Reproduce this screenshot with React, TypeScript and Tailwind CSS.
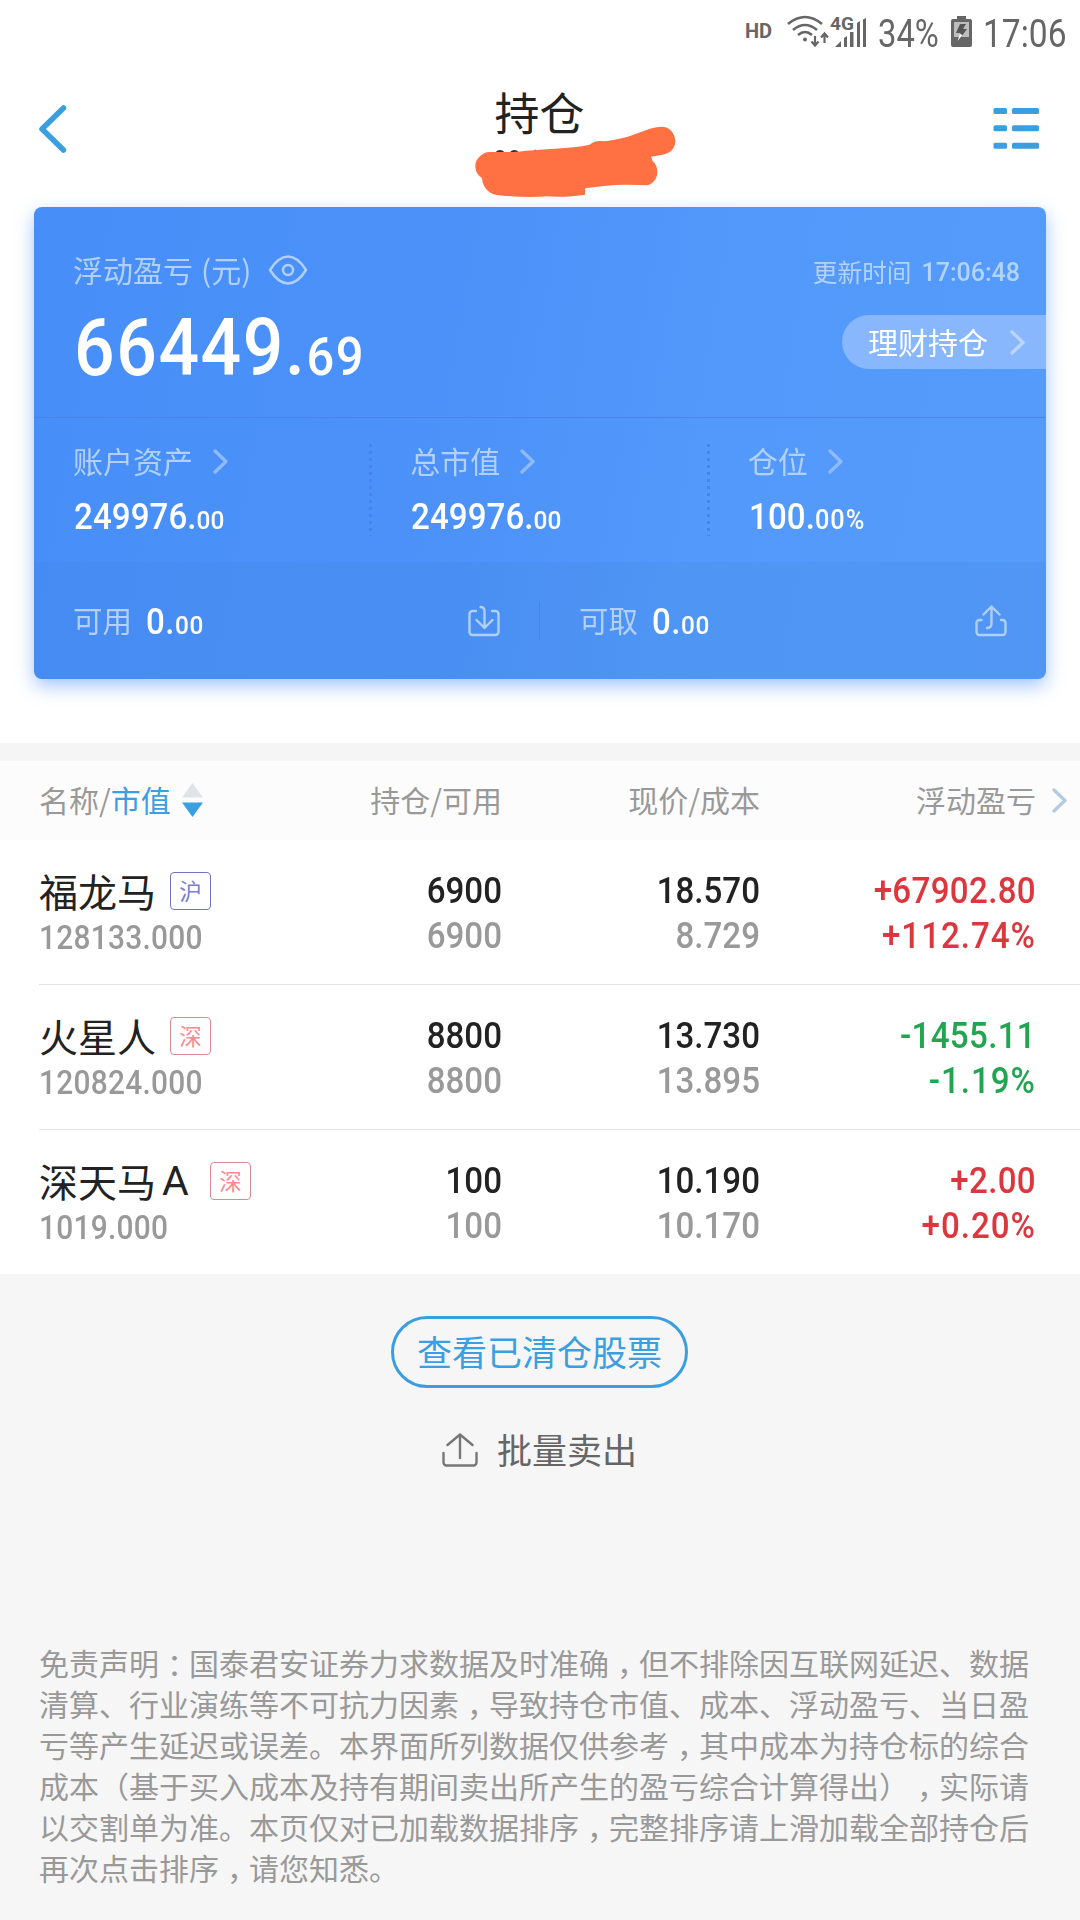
import React from 'react';

const summary = [
  { label: '账户资产', int: '249976.', dec: '00' },
  { label: '总市值', int: '249976.', dec: '00' },
  { label: '仓位', int: '100.', dec: '00%' },
];

const holdings = [
  { name: '福龙马', suffix: '', market: '沪', value: '128133.000', qty: '6900', avail: '6900', price: '18.570', cost: '8.729', profit: '+67902.80', rate: '+112.74%' },
  { name: '火星人', suffix: '', market: '深', value: '120824.000', qty: '8800', avail: '8800', price: '13.730', cost: '13.895', profit: '-1455.11', rate: '-1.19%' },
  { name: '深天马', suffix: 'A', market: '深', value: '1019.000', qty: '100', avail: '100', price: '10.190', cost: '10.170', profit: '+2.00', rate: '+0.20%' },
];

const disclaimer = [
  '免责声明：国泰君安证券力求数据及时准确，但不排除因互联网延迟、数据',
  '清算、行业演练等不可抗力因素，导致持仓市值、成本、浮动盈亏、当日盈',
  '亏等产生延迟或误差。本界面所列数据仅供参考，其中成本为持仓标的综合',
  '成本（基于买入成本及持有期间卖出所产生的盈亏综合计算得出），实际请',
  '以交割单为准。本页仅对已加载数据排序，完整排序请上滑加载全部持仓后',
  '再次点击排序，请您知悉。',
];

const Chevron: React.FC<{ className?: string }> = ({ className = '' }) => (
  <svg viewBox="0 0 15 25" className={`w-[15px] h-[25px] ${className}`} fill="none" stroke="currentColor" strokeWidth="3.300" strokeLinecap="round" strokeLinejoin="round">
    <path d="M2 2l11 10.500L2 23" />
  </svg>
);

const StatusBar: React.FC = () => (
  <div className="h-[62px] flex items-start justify-end text-[#666]">
    <span className="mt-[20px] w-[42px] font-['Roboto'] font-bold text-[20px] leading-[22px]">HD</span>
    <svg viewBox="0 0 84 34" className="mt-[14px] w-[84px] h-[34px]" fill="none" stroke="currentColor">
      <g strokeWidth="2.600">
        <path d="M1 10q17-14 34 0" />
        <path d="M6 16q12-10 24 0" />
        <path d="M11 21q7-6 14 0" />
      </g>
      <circle cx="18" cy="25.500" r="2" fill="currentColor" stroke="none" />
      <path d="M28 22v9M24.500 27.500l3.500 4 3.500-4M37.500 29v-9M34 23.500l3.500-4 3.500 4" strokeWidth="2.200" />
      <text x="43" y="16" fontSize="17.500" fontFamily="Roboto" fontWeight="700" fill="currentColor" stroke="none" textLength="24" lengthAdjust="spacingAndGlyphs">4G</text>
      <path d="M48 33l6-6v6zM57 33v-9l3-2v11zM63 33V18h3.500v15zM70 33V9l3-2v26zM76 33V5.500L79 4v29z" fill="currentColor" stroke="none" />
    </svg>
    <span className="mt-[10px] ml-[7px] w-[73px] origin-left scale-x-[0.84] whitespace-nowrap font-['Roboto'] text-[39px] leading-[48px]">34%</span>
    <svg viewBox="0 0 21 32" className="mt-[16px] w-[21px] h-[32px]">
      <path d="M6 0h9v3h4a2 2 0 0 1 2 2v24a2 2 0 0 1-2 2H2a2 2 0 0 1-2-2V5a2 2 0 0 1 2-2h4z" fill="#666" />
      <path d="M3 6h15v15H3z" fill="#bdbdbd" />
      <path d="M9 8h6l-3 5h4L8 24l1.500-7H5z" fill="#555" />
      <path d="M9 18l-2.500 7 5-6z" fill="#fff" />
    </svg>
    <span className="mt-[10px] ml-[11px] w-[97px] origin-left scale-x-[0.86] whitespace-nowrap font-['Roboto'] text-[39px] leading-[48px]">17:06</span>
  </div>
);

const Header: React.FC = () => (
  <header className="relative h-[145px] px-[38px] flex justify-between">
    <svg viewBox="0 0 30 50" className="mt-[42px] w-[48px] h-[50px]" preserveAspectRatio="xMinYMid meet" fill="none" stroke="#3a9fe0" strokeWidth="5.500" strokeLinecap="round" strokeLinejoin="round">
      <path d="M25.500 4L4 25l21.500 21" />
    </svg>
    <h1 className="mt-[20px] text-[45px] leading-[60px] text-[#222]">持仓</h1>
    <svg viewBox="0 0 48 44" className="mt-[45px] mr-px w-[48px] h-[44px]" fill="#3a9fe0">
      {[1, 18.3, 35.7].map((y) => (
        <g key={y}>
          <rect x="0.500" y={y} width="13.500" height="6" rx="1.500" />
          <rect x="19" y={y} width="27" height="6" rx="1.500" />
        </g>
      ))}
    </svg>
    {/* marker stroke hiding the account number */}
    <svg viewBox="0 0 780 450" className="absolute left-[440px] top-[8px] w-[260px] h-[150px]">
      <path d="M168 250q12-12 24 0M211 250q12-12 24 0M277 250l6-5v9z" fill="#333" stroke="#333" strokeWidth="7" />
      <path
        d="M140 247C118 255 105 272 106 291C107 306 114 317 126 324C127 350 145 371 170 375C215 380 270 383 320 379C360 382 405 379 435 374V355C470 350 500 346 530 345C560 343 590 344 622 346C642 339 652 324 652 305C652 290 645 279 638 274C637 266 633 262 633 260C650 256 668 257 684 249C699 241 706 227 706 212C704 187 686 169 664 170C625 172 590 194 548 204C530 208 510 212 492 214C475 211 462 213 449 224C420 231 385 233 345 236C300 239 265 241 235 245C200 248 170 244 140 247Z"
        fill="#ff7043"
      />
    </svg>
  </header>
);

const AssetCard: React.FC = () => (
  <section className="mx-[34px] h-[472px] rounded-lg overflow-hidden flex flex-col text-white bg-[linear-gradient(100deg,#478ef8_0%,#4c92f9_45%,#5399fb_65%,#559bfb_100%)]">
    <div className="h-[211px] border-b border-[#4685ea] flex justify-between">
      <div className="pl-[40px] pt-[40px]">
        <div className="-ml-px flex items-center h-[44px] text-[30px] leading-[44px] text-[#b2d0fd]">
          <span>浮动盈亏</span>
          <span className="ml-[8px]">(元)</span>
          <svg viewBox="0 0 40 30" className="mt-[2px] ml-[17px] w-[40px] h-[30px]" fill="none" stroke="currentColor" strokeWidth="2.500">
            <path d="M2 15C7 7 13 1.500 20 1.500S33 7 38 15C33 23 27 28.500 20 28.500S7 23 2 15Z" strokeLinejoin="round" />
            <circle cx="20" cy="15" r="5" />
          </svg>
        </div>
        <div className="mt-[4px] origin-left scale-x-[0.905] whitespace-nowrap tracking-[0.022em] font-['Roboto'] font-medium text-[79px] leading-[106px]">
          66449.<span className="text-[54px]">69</span>
        </div>
      </div>
      <div className="flex flex-col items-end">
        <div className="mt-[48px] mr-[26px] flex items-center gap-[10px] h-9 text-[24.700px] text-[#b2d3fd]">
          <span className="-mt-[2px]">更新时间</span>
          <span className="font-['Roboto'] font-medium text-[25px]">17:06:48</span>
        </div>
        <div className="mt-[24px] w-[204px] h-[54px] pl-[26px] pr-[21px] rounded-l-full bg-[#88b7fd] flex items-center justify-between text-[30px] leading-[50px]">
          <span className="pb-[3px]">理财持仓</span>
          <Chevron className="text-[#bad6fe]" />
        </div>
      </div>
    </div>

    <div className="h-[144px] grid grid-cols-3">
      {summary.map((item, i) => (
        <div key={item.label} className="pl-[40px] pt-[20px] flex justify-between">
          <div>
            <div className="-ml-px flex items-center text-[30px] leading-[44px] text-[#b2d0fd]">
              <span>{item.label}</span>
              <Chevron className="mt-[2px] ml-[20px] text-[#8fbbfd]" />
            </div>
            <div className="mt-[11px] origin-left scale-x-[0.92] whitespace-nowrap tracking-[0.002em] font-['Roboto'] font-medium text-[36px] leading-[48px]">
              {item.int}
              <span className={i === 2 ? 'text-[27.5px] tracking-[0.04em]' : 'text-[26.5px]'}>{item.dec}</span>
            </div>
          </div>
          {i < 2 && (
            <div className="mt-[6px] -mr-px h-[92px] w-[3px] bg-[repeating-linear-gradient(to_bottom,#4684e6_0,#4684e6_3px,transparent_3px,transparent_7px)]" />
          )}
        </div>
      ))}
    </div>

    <div className="flex-1 bg-[#3c7dcd]/15 flex items-center">
      <div className="w-[506px] h-[38px] pl-[39px] pr-[39px] flex items-center border-r border-[#4685e0]">
        <span className="-mt-[4px] text-[29.5px] leading-[44px] text-[#b2d0fb]">可用</span>
        <span className="mt-[6px] ml-[14px] origin-left scale-x-[0.92] tracking-[0.015em] font-['Roboto'] font-medium text-[36px] leading-[44px]">
          0.<span className="text-[26.5px]">00</span>
        </span>
        <svg viewBox="0 0 32 32" className="ml-auto w-[32px] h-[32px] text-[#b0cffa]" fill="none" stroke="currentColor" strokeWidth="2.400" strokeLinecap="round" strokeLinejoin="round">
          <path d="M8 6H4.500a3 3 0 0 0-3 3v18a3 3 0 0 0 3 3h23a3 3 0 0 0 3-3V9a3 3 0 0 0-3-3H24" />
          <path d="M12.500 2c2.500 0 4 1.500 4 4.500V22M8.500 15l8 8 8-8" />
        </svg>
      </div>
      <div className="w-[506px] h-[38px] pl-[39px] pr-[39px] flex items-center">
        <span className="-mt-[4px] text-[29.5px] leading-[44px] text-[#b2d0fb]">可取</span>
        <span className="mt-[6px] ml-[14px] origin-left scale-x-[0.92] tracking-[0.015em] font-['Roboto'] font-medium text-[36px] leading-[44px]">
          0.<span className="text-[26.5px]">00</span>
        </span>
        <svg viewBox="0 0 32 32" className="ml-auto w-[32px] h-[32px] text-[#b0cffa]" fill="none" stroke="currentColor" strokeWidth="2.400" strokeLinecap="round" strokeLinejoin="round">
          <path d="M6.500 15H4.500a3 3 0 0 0-3 3v9a3 3 0 0 0 3 3h23a3 3 0 0 0 3-3v-9a3 3 0 0 0-3-3H26" />
          <path d="M12 23c3 0 4.500-1.500 4.500-4.500V2M8.500 9.500l8-8 8 8" />
        </svg>
      </div>
    </div>
  </section>
);

const HoldingsTable: React.FC = () => (
  <section className="bg-white">
    <div className="h-[79px] bg-[#fcfcfc] flex items-center pb-[3px] text-[30px] text-[#999]">
      <div className="w-[241px] pl-[39px] flex items-center whitespace-nowrap">
        <span>名称/<span className="text-[#3a9fe0]">市值</span></span>
        <svg viewBox="0 0 21 34" className="mt-[2px] ml-[11px] shrink-0 w-[21px] h-[34px]">
          <path d="M10.500 0L21 14.500H0z" fill="#e0e4e8" />
          <path d="M0 19.500h21L10.500 34z" fill="#3a9fe0" />
        </svg>
      </div>
      <div className="w-[261px] text-right">持仓/可用</div>
      <div className="w-[258px] text-right">现价/成本</div>
      <div className="w-[276px] text-right">浮动盈亏</div>
      <Chevron className="mt-[2px] ml-[16px] w-[13px] h-[22px] text-[#b5cbe0]" />
    </div>

    {holdings.map((item, i) => (
      <div key={item.name} className="pl-[39px]">
        <div className={`flex ${i < 2 ? 'h-[145px] border-b border-[#e5e5e5]' : 'h-[144px]'}`}>
          <div className="w-[222px] pt-[23px]">
            <div className="flex items-center h-[54px] whitespace-nowrap text-[39px] leading-[54px] text-[#222]">
              <span>{item.name}</span>
              {item.suffix && <span className="mt-[2px] ml-[6px] w-[28px] font-['Roboto'] text-[41px]">{item.suffix}</span>}
              <span
                className={`mt-[2px] w-[41px] h-[38px] border rounded flex items-center justify-center pb-[2px] text-[22.5px] leading-[34px] ${
                  item.suffix ? 'ml-[20px]' : 'ml-[14px]'
                } ${item.market === '沪' ? 'border-[#7076b8] text-[#7880d0]' : 'border-[#dc8a92] text-[#fa8a90]'}`}
              >
                {item.market}
              </span>
            </div>
            <div className="mt-[3px] origin-left scale-x-[0.92] tracking-[0.008em] font-['Roboto'] font-medium text-[32.5px] leading-[36px] text-[#999]">{item.value}</div>
          </div>
          <div className="w-[241px] pt-[29px] text-right origin-right scale-x-[0.92] font-['Roboto'] font-medium text-[36px] leading-[45px]">
            <div className="text-[#222]">{item.qty}</div>
            <div className="text-[#999]">{item.avail}</div>
          </div>
          <div className="w-[258px] pt-[29px] text-right origin-right scale-x-[0.92] font-['Roboto'] font-medium text-[36px] leading-[45px]">
            <div className="text-[#222]">{item.price}</div>
            <div className="text-[#999]">{item.cost}</div>
          </div>
          <div
            className={`w-[276px] pt-[29px] text-right origin-right scale-x-[0.92] font-['Roboto'] font-medium text-[36px] leading-[45px] ${
              item.profit.startsWith('+') ? 'text-[#dc363e]' : 'text-[#22a550]'
            }`}
          >
            <div className="tracking-[0.01em]">{item.profit}</div>
            <div className="tracking-[0.03em]">{item.rate}</div>
          </div>
        </div>
      </div>
    ))}
  </section>
);

const App: React.FC = () => (
  <div className="w-[1080px] h-[1920px] overflow-hidden bg-[#f6f6f6] font-['Noto_Sans_CJK_SC',sans-serif]">
    <div className="h-[743px] bg-white">
      <StatusBar />
      <Header />
      <div className="drop-shadow-[0_7px_9px_rgba(72,140,250,0.5)]">
        <AssetCard />
      </div>
    </div>
    <div className="h-[18px] bg-[#f5f5f5]" />
    <HoldingsTable />

    <div className="pt-[42px] pr-px flex flex-col items-center">
      <button className="w-[297px] h-[72px] pb-[2px] border-3 border-[#3a9fe0] rounded-full text-[35px] leading-[64px] text-[#3a9fe0]">查看已清仓股票</button>
      <button className="mt-[34px] h-[54px] flex items-center gap-[19px] text-[35px] leading-[54px] text-[#666]">
        <svg viewBox="0 0 36 34" className="mt-[2px] w-[36px] h-[34px]" fill="none" stroke="#777" strokeWidth="2.400" strokeLinecap="round" strokeLinejoin="round">
          <path d="M1.500 20v9.500a3 3 0 0 0 3 3h27a3 3 0 0 0 3-3V20" />
          <path d="M18 25V2M5.500 12L18 1.500 30.500 12" />
        </svg>
        <span>批量卖出</span>
      </button>
    </div>

    <div className="mt-[166px] pl-[39px] text-[30px] leading-[41px] text-[#999] whitespace-nowrap">
      {disclaimer.map((line) => (
        <p key={line}>
          {line.split(/([，：])/).map((part, i) => (
            <span key={i} className={i % 2 ? "inline-block w-[30px] pl-[8px] [font-feature-settings:'halt']" : ''}>{part}</span>
          ))}
        </p>
      ))}
    </div>
  </div>
);

export default App;
